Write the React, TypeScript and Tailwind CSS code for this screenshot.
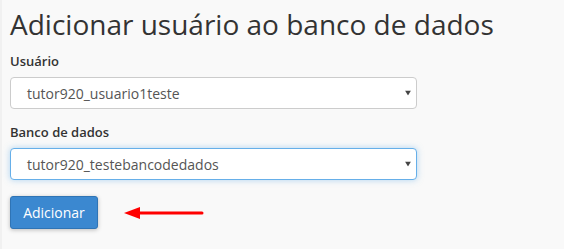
import React from "react";

function Caret() {
  return (
    <svg width="6" height="5" viewBox="0 0 6 5" className="absolute right-[5px] top-1/2 -translate-y-1/2">
      <path d="M0 0 L6 0 L3 5 Z" fill="#444" />
    </svg>
  );
}

export default function App() {
  return (
    <div
      className="w-[564px] h-[249px] bg-[#f9f9f9] overflow-hidden border-l-2 border-[#f1f1f1]"
      style={{ fontFamily: '"Open Sans", sans-serif' }}
    >
      <div className="pl-[8px] pt-[5px]">
        <h1 className="text-[28px] leading-[38px] font-normal text-[#333]">
          Adicionar usuário ao banco de dados
        </h1>
        <div className="mt-[10px] text-[13px] leading-[16px] font-semibold text-[#333]">Usuário</div>
        <div className="relative mt-[8px] w-[407px] h-[32px] bg-white border border-[#ccc] rounded-[4px] flex items-center pl-[16px] text-[14px] text-[#555]">
          tutor920_usuario1teste
          <Caret />
        </div>
        <div className="mt-[15px] text-[13px] leading-[16px] font-semibold text-[#333]">Banco de dados</div>
        <div className="relative mt-[8px] w-[407px] h-[32px] bg-white border border-[#66afe9] rounded-[4px] flex items-center pl-[16px] text-[14px] text-[#555] shadow-[0_0_6px_rgba(102,175,233,0.5)]">
          tutor920_testebancodedados
          <Caret />
        </div>
        <div className="mt-[16px] flex items-center">
          <button className="w-[88px] h-[33px] bg-[#3b88d0] border border-[#2f74b5] rounded-[3px] text-white text-[14px] shadow-[0_1px_4px_rgba(0,0,0,0.25)]">
            Adicionar
          </button>
          <svg width="80" height="12" viewBox="0 0 80 12" className="ml-[26px]">
            <line x1="12" y1="6" x2="78" y2="6" stroke="#f00" strokeWidth="3" strokeLinecap="round" />
            <path d="M0 6 L16 0 L16 12 Z" fill="#f00" />
          </svg>
        </div>
      </div>
    </div>
  );
}
